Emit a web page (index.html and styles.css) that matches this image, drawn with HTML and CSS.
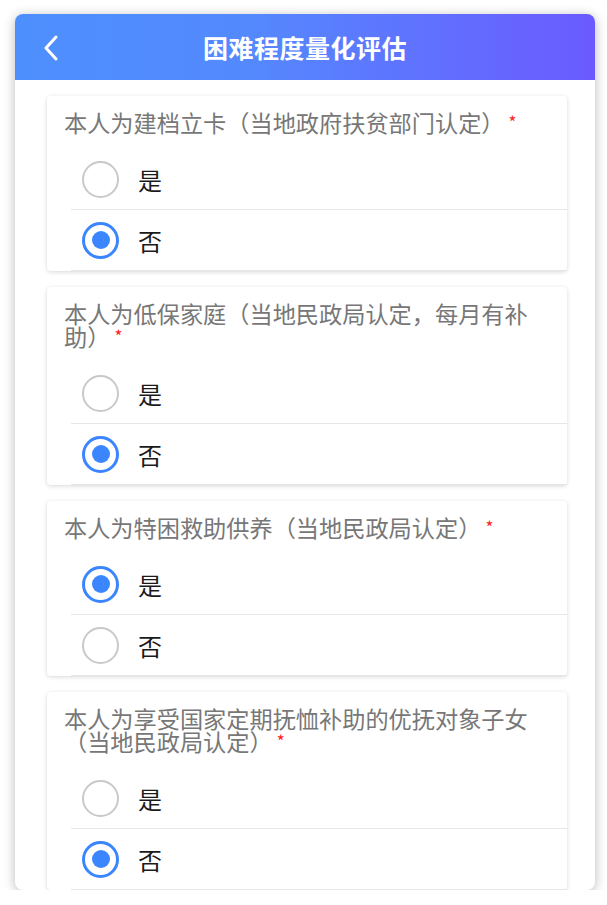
FILE: index.html
```html
<!DOCTYPE html>
<html lang="zh-CN">
<head>
  <meta charset="UTF-8">
  <title>困难程度量化评估</title>
  <link rel="stylesheet" href="styles.css">
</head>
<body>
  <div class="phone">
    <header class="nav-bar">
      <span class="back">
        <svg width="16" height="26" viewBox="0 0 16 26">
          <path d="M13 2 L3 13 L13 24" fill="none" stroke="#fff" stroke-width="3" stroke-linecap="round" stroke-linejoin="round"/>
        </svg>
      </span>
      <h1>困难程度量化评估</h1>
    </header>

    <div class="content">
      <div class="card">
        <div class="question">本人为建档立卡（当地政府扶贫部门认定）<span class="required">*</span></div>
        <div class="option"><span class="radio"></span><span class="label">是</span></div>
        <div class="option"><span class="radio checked"></span><span class="label">否</span></div>
      </div>

      <div class="card">
        <div class="question">本人为低保家庭（当地民政局认定，每月有补助）<span class="required">*</span></div>
        <div class="option"><span class="radio"></span><span class="label">是</span></div>
        <div class="option"><span class="radio checked"></span><span class="label">否</span></div>
      </div>

      <div class="card">
        <div class="question">本人为特困救助供养（当地民政局认定）<span class="required">*</span></div>
        <div class="option"><span class="radio checked"></span><span class="label">是</span></div>
        <div class="option"><span class="radio"></span><span class="label">否</span></div>
      </div>

      <div class="card">
        <div class="question">本人为享受国家定期抚恤补助的优抚对象子女（当地民政局认定）<span class="required">*</span></div>
        <div class="option"><span class="radio"></span><span class="label">是</span></div>
        <div class="option"><span class="radio checked"></span><span class="label">否</span></div>
      </div>
    </div>
  </div>
</body>
</html>
```

FILE: styles.css
```css
body {
  margin: 0;
  background: #fff;
  font-family: "Noto Sans CJK SC", "Noto Sans", sans-serif;
}

.phone {
  margin: 14px 12px 0 15px;
  height: 876px;
  border-radius: 8px;
  overflow: hidden;
  background: #fff;
  box-shadow: 0 2px 12px rgba(0, 0, 0, 0.28);
}

.nav-bar {
  height: 66px;
  display: flex;
  align-items: center;
  justify-content: center;
  position: relative;
  background: linear-gradient(90deg, #4d8ffd 0%, #5489fe 40%, #6b5aff 100%);
}

.nav-bar h1 {
  margin: 0;
  color: #fff;
  font-size: 25px;
  font-weight: bold;
  letter-spacing: 0.5px;
}

.back {
  position: absolute;
  left: 28px;
  top: 21px;
  display: flex;
}

.content {
  padding: 16px 28px 0 32px;
  display: flex;
  flex-direction: column;
  gap: 16px;
}

.card {
  background: #fff;
  border-radius: 4px;
  box-shadow: 0 1px 4px rgba(0, 0, 0, 0.16);
}

.question {
  padding: 15px 30px 15px 17px;
  font-size: 23.2px;
  line-height: 23px;
  color: #777;
}

.required {
  color: #f22;
  font-size: 17px;
  line-height: 0;
  margin-left: 4px;
  vertical-align: 3px;
}

.option {
  margin-left: 24px;
  height: 60px;
  padding-left: 11px;
  display: flex;
  align-items: center;
  border-bottom: 1px solid #e6e6e6;
}

.radio {
  width: 37px;
  height: 37px;
  box-sizing: border-box;
  border: 2px solid #c9c9c9;
  border-radius: 50%;
  display: flex;
  align-items: center;
  justify-content: center;
}

.radio.checked {
  border: 3.5px solid #3b86ff;
}

.radio.checked::after {
  content: "";
  width: 18px;
  height: 18px;
  border-radius: 50%;
  background: #3b86ff;
}

.label {
  margin-left: 19px;
  font-size: 24px;
  color: #1a1a1a;
}
```
